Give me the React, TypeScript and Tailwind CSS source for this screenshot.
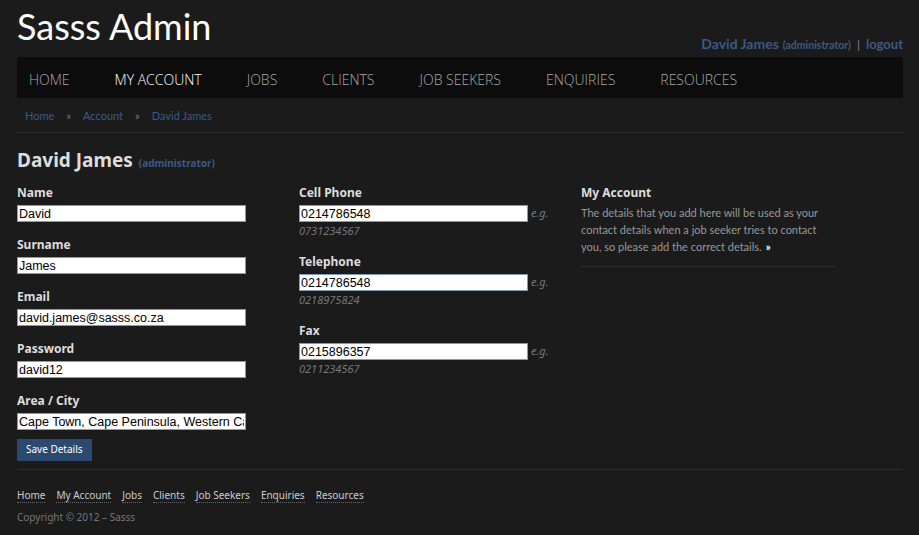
import React from "react";

const navItems = ["HOME", "MY ACCOUNT", "JOBS", "CLIENTS", "JOB SEEKERS", "ENQUIRIES", "RESOURCES"];
const footerLinks = ["Home", "My Account", "Jobs", "Clients", "Job Seekers", "Enquiries", "Resources"];

function Field({ label, value }: { label: string; value: string }) {
  return (
    <div className="mb-[15px]">
      <div className="text-[12px] font-bold leading-[16px] text-[#dddddd]">{label}</div>
      <input
        type="text"
        defaultValue={value}
        className="mt-[4px] block h-[17px] w-[229px] border border-[#7f9db9] bg-white px-[1px] text-[12.5px] leading-[15px] text-black font-['Liberation_Sans',Arial,sans-serif] outline-none"
      />
    </div>
  );
}

function PhoneField({ label, value, example }: { label: string; value: string; example: string }) {
  return (
    <div className="mb-[15px]">
      <div className="text-[12px] font-bold leading-[16px] text-[#dddddd]">{label}</div>
      <div className="mt-[4px] flex items-center">
        <input
          type="text"
          defaultValue={value}
          className="block h-[17px] w-[229px] border border-[#7f9db9] bg-white px-[1px] text-[12.5px] leading-[15px] text-black font-['Liberation_Sans',Arial,sans-serif] outline-none"
        />
        <span className="ml-[3px] text-[11px] italic text-[#777777]">e.g.</span>
      </div>
      <div className="text-[11px] italic leading-[17px] text-[#777777]">{example}</div>
    </div>
  );
}

export default function App() {
  return (
    <div className="min-h-[535px] w-full bg-[#1b1b1b] font-['Noto_Sans',Tahoma,sans-serif]">
      <div className="w-[886px] ml-[17px]">
        {/* header */}
        <div className="flex h-[57px] items-start justify-between">
          <div className="pt-[6px] text-[36px] leading-[40px] text-white font-['Lato',sans-serif]">Sasss Admin</div>
          <div className="mt-[33px] flex items-baseline font-bold text-[#3b5a85] font-['Lato',sans-serif]">
            <span className="text-[14px]">David James</span>
            <span className="ml-[4px] text-[10.5px]">(administrator)</span>
            <span className="mx-[6px] text-[12px] font-normal text-[#888888]">|</span>
            <span className="text-[13px]">logout</span>
          </div>
        </div>

        {/* nav */}
        <div className="flex h-[41px] items-center gap-[45px] bg-[#0c0c0c] pl-[12px] pt-[4px] text-[14px] text-[#aaaaaa] font-['Open_Sans',sans-serif] font-light">
          {navItems.map((item) => (
            <span key={item} className={item === "MY ACCOUNT" ? "text-white" : ""}>
              {item}
            </span>
          ))}
        </div>

        {/* breadcrumb */}
        <div className="flex h-[35px] items-center border-b border-[#2e2e2e] pl-[8px] pt-[2px] text-[11px] text-[#3b5a85] font-['Lato',sans-serif]">
          <span>Home</span>
          <span className="mx-[12px] text-[#777777]">»</span>
          <span>Account</span>
          <span className="mx-[12px] text-[#777777]">»</span>
          <span>David James</span>
        </div>

        {/* heading */}
        <div className="mt-[15px] flex items-baseline">
          <span className="text-[19px] font-bold leading-[24px] text-[#dddddd]">David James</span>
          <span className="ml-[6px] text-[10px] font-bold text-[#3b5a85]">(administrator)</span>
        </div>

        {/* form columns */}
        <div className="mt-[13px] grid grid-cols-[282px_282px_254px]">
          <div>
            <Field label="Name" value="David" />
            <Field label="Surname" value="James" />
            <Field label="Email" value="david.james@sasss.co.za" />
            <Field label="Password" value="david12" />
            <div className="mb-[5px]">
              <div className="text-[12px] font-bold leading-[16px] text-[#dddddd]">Area / City</div>
              <input
                type="text"
                defaultValue="Cape Town, Cape Peninsula, Western Cape"
                className="mt-[4px] block h-[17px] w-[229px] border border-[#7f9db9] bg-white px-[1px] text-[12.5px] leading-[15px] text-black font-['Liberation_Sans',Arial,sans-serif] outline-none"
              />
            </div>
            <button className="h-[22px] bg-[#2c4a70] px-[9px] text-[10px] text-white">Save Details</button>
          </div>

          <div>
            <PhoneField label="Cell Phone" value="0214786548" example="0731234567" />
            <PhoneField label="Telephone" value="0214786548" example="0218975824" />
            <PhoneField label="Fax" value="0215896357" example="0211234567" />
          </div>

          <div>
            <div className="text-[12px] font-bold leading-[16px] text-[#dddddd]">My Account</div>
            <p className="mt-[3px] border-b border-[#2e2e2e] pb-[11px] text-[11px] leading-[17px] text-[#999999] font-['Lato',sans-serif]">
              The details that you add here will be used as your contact details when a job seeker tries to contact
              you, so please add the correct details.
              <span className="ml-[4px] inline-block font-bold text-white">»</span>
            </p>
          </div>
        </div>

        {/* footer */}
        <div className="mt-[8px] border-t border-[#2e2e2e] pt-[19px]">
          <div className="flex gap-[11px] text-[10px] text-[#cccccc]">
            {footerLinks.map((l) => (
              <span key={l} className="border-b border-dotted border-[#666666] leading-[13px]">
                {l}
              </span>
            ))}
          </div>
          <div className="mt-[7px] text-[10px] text-[#777777]">Copyright © 2012 – Sasss</div>
        </div>
      </div>
    </div>
  );
}
